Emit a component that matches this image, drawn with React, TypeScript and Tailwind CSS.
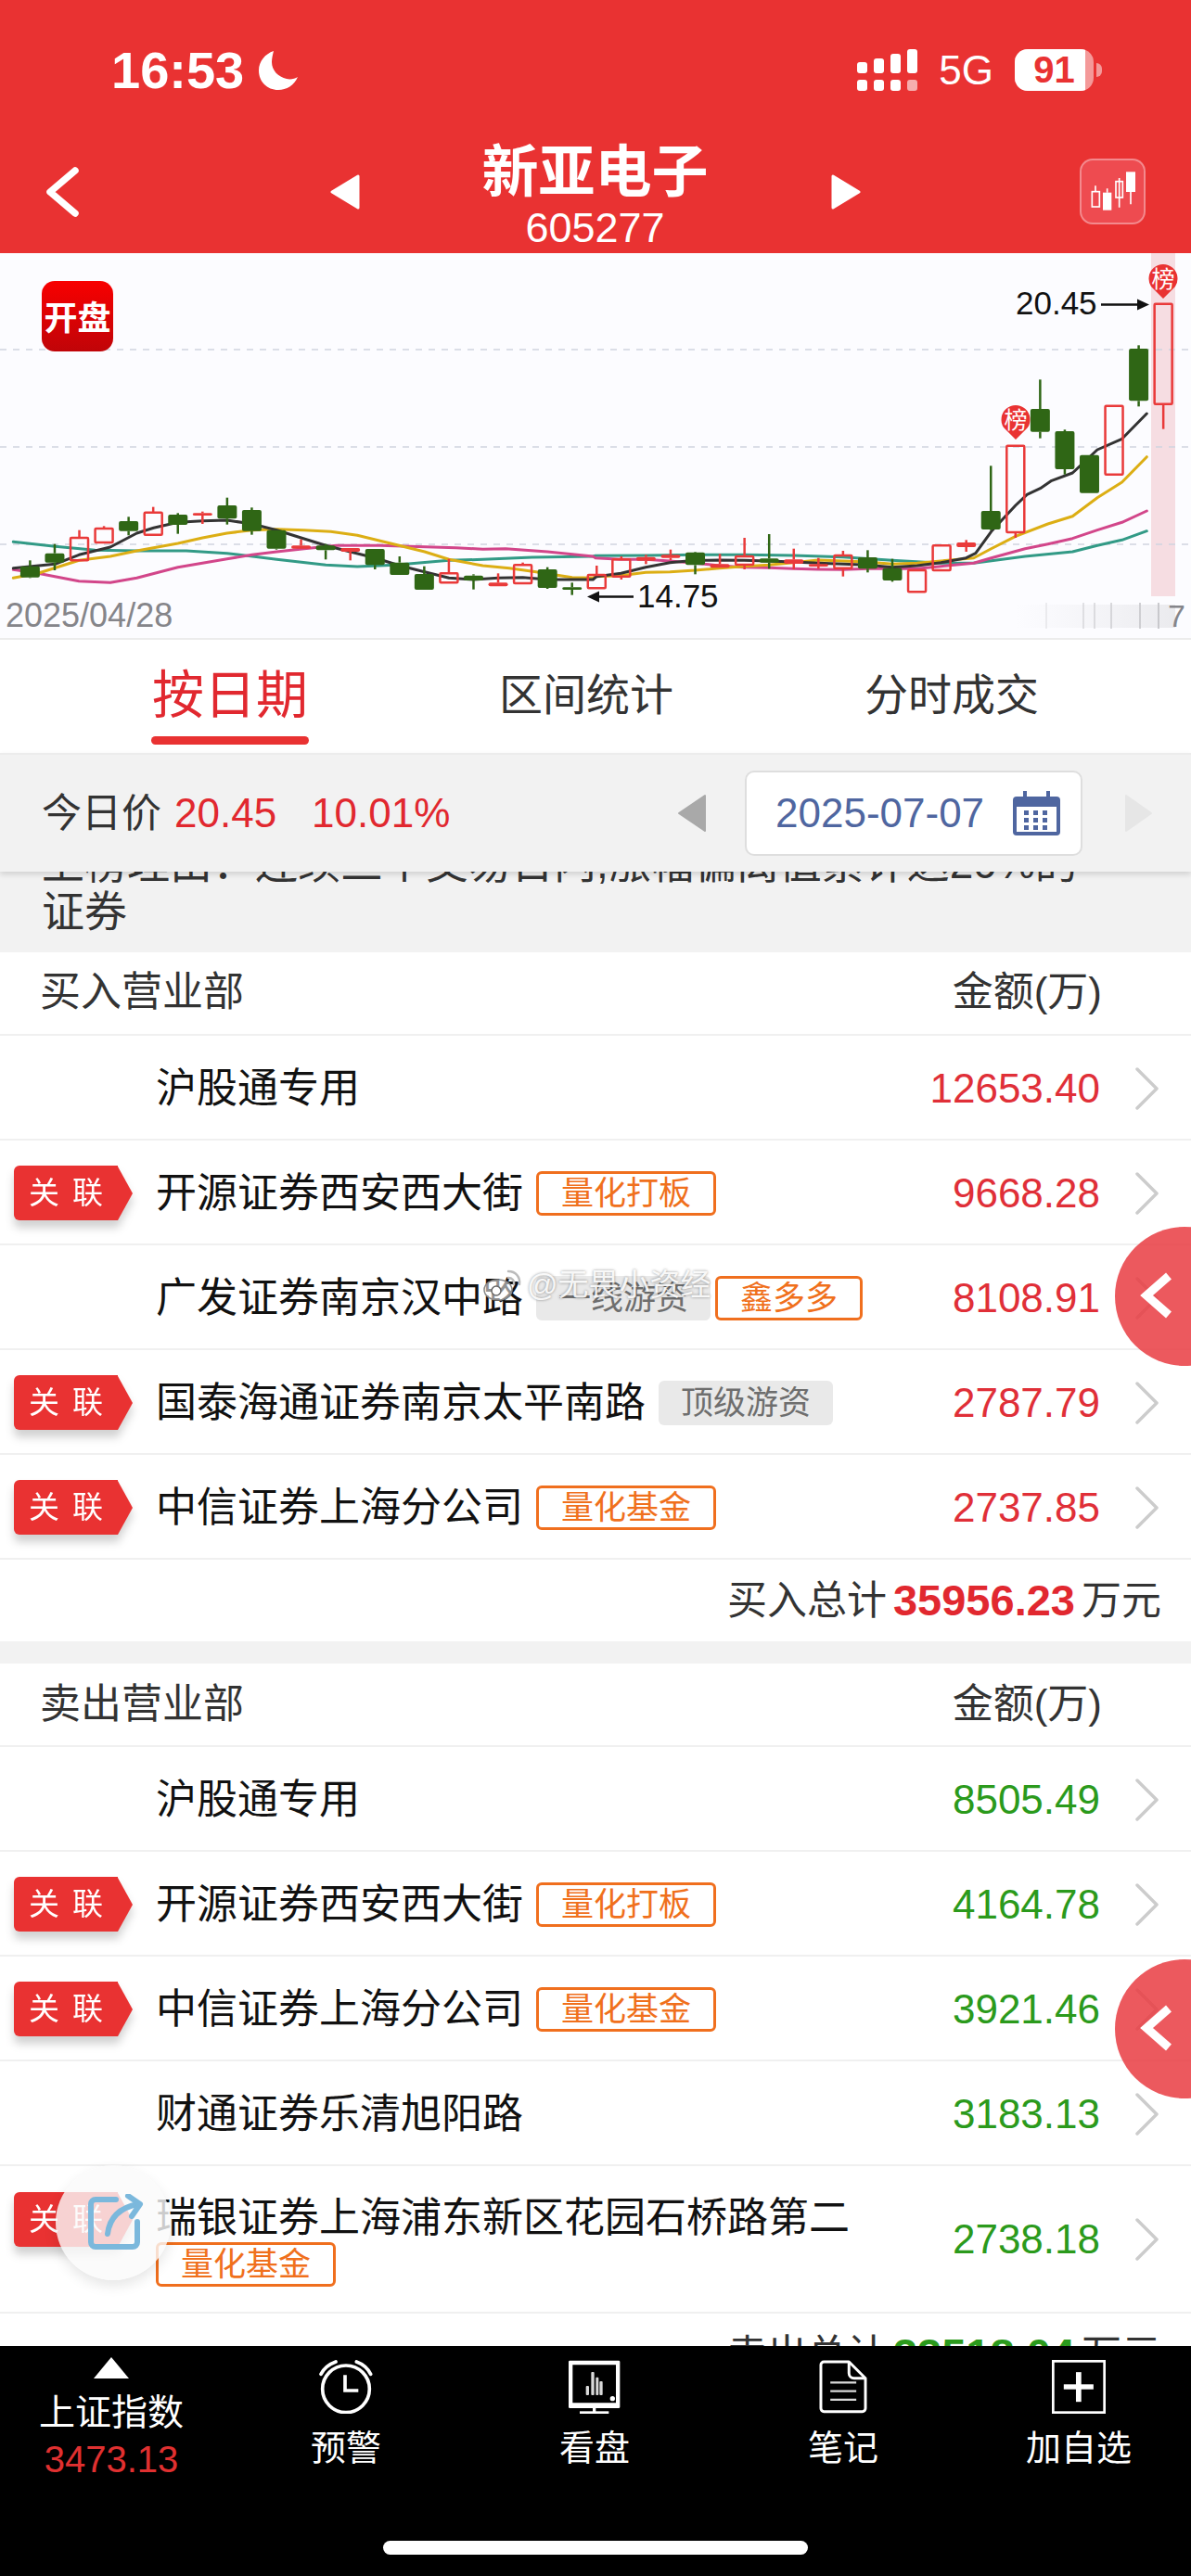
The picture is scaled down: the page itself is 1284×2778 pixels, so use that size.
import React from "react";

const RED = "#e93232";

// candle data read off the chart: body top, body bottom, wick top, wick bottom (zoomed px), type
const candles: [number, number, number, number, "r" | "g"][] = [
  [1022, 1058, 1003, 1060, "g"], [980, 1010, 950, 1035, "g"], [930, 1003, 905, 1003, "r"], [900, 945, 892, 945, "r"],
  [876, 908, 862, 922, "g"], [848, 920, 830, 920, "r"], [855, 888, 850, 917, "g"], [850, 858, 845, 885, "r"],
  [825, 868, 800, 887, "g"], [840, 908, 832, 920, "g"], [905, 965, 905, 968, "g"], [955, 965, 935, 965, "r"],
  [955, 970, 950, 1000, "g"], [963, 975, 963, 1003, "r"], [966, 1018, 966, 1032, "g"], [1010, 1050, 990, 1050, "g"],
  [1047, 1098, 1022, 1098, "g"], [1045, 1075, 998, 1075, "r"], [1052, 1068, 1048, 1097, "g"], [1075, 1087, 1045, 1087, "r"],
  [1018, 1077, 1010, 1077, "r"], [1032, 1092, 1025, 1095, "g"], [1090, 1098, 1075, 1115, "g"], [1050, 1093, 1020, 1093, "r"],
  [1000, 1055, 990, 1065, "r"], [992, 1004, 985, 1015, "r"], [985, 995, 968, 1002, "r"], [977, 1018, 975, 1048, "g"],
  [1015, 1027, 982, 1027, "r"], [990, 1017, 930, 1032, "r"], [997, 1010, 918, 1030, "g"], [1000, 1014, 965, 1032, "r"],
  [1015, 1023, 995, 1030, "r"], [987, 1028, 972, 1055, "r"], [993, 1030, 970, 1042, "g"], [1028, 1068, 998, 1072, "g"],
  [1035, 1105, 1035, 1105, "r"], [955, 1035, 955, 1035, "r"], [945, 960, 937, 975, "r"], [843, 903, 697, 905, "g"],
  [632, 912, 632, 930, "r"], [513, 587, 418, 608, "g"], [585, 708, 580, 725, "g"], [662, 785, 662, 785, "g"],
  [503, 725, 503, 725, "r"], [318, 487, 307, 505, "g"], [173, 497, 173, 578, "r"],
];

const line = (left: number[][], right: number[][]) =>
  [
    ...left.map(([x, y]) => `${(x / 2.44).toFixed(1)},${(270 + y / 3).toFixed(1)}`),
    ...right.map(([x, y]) => `${(642 + x / 2.44).toFixed(1)},${(270 + y / 3).toFixed(1)}`),
  ].join(" ");

const ma = [
  {
    color: "#329a86",
    pts: line(
      [[35, 943], [145, 958], [250, 970], [360, 972], [490, 972], [597, 980], [728, 1000], [857, 1018], [940, 1023], [1040, 1018], [1181, 1003], [1270, 1000], [1400, 993], [1560, 990]],
      [[0, 988], [132, 987], [262, 985], [391, 985], [520, 987], [651, 992], [780, 1003], [909, 1012], [995, 1012], [1130, 990], [1255, 975], [1320, 955], [1385, 937], [1450, 908]]
    ),
  },
  {
    color: "#d2468a",
    pts: line(
      [[35, 1033], [100, 1045], [208, 1070], [290, 1075], [360, 1060], [468, 1025], [597, 998], [663, 985], [728, 975], [800, 965], [885, 955], [1000, 955], [1200, 962], [1270, 967], [1330, 965], [1440, 975], [1560, 990]],
      [[0, 995], [67, 1000], [132, 1000], [196, 1005], [262, 1012], [326, 1020], [391, 1025], [456, 1027], [520, 1030], [586, 1032], [651, 1033], [716, 1030], [780, 1030], [846, 1030], [909, 1022], [995, 1012], [1041, 995], [1130, 965], [1190, 950], [1255, 932], [1320, 905], [1385, 880], [1450, 843]]
    ),
  },
  {
    color: "#dcae14",
    pts: line(
      [[35, 1060], [100, 1045], [208, 1003], [290, 990], [360, 972], [468, 948], [533, 930], [597, 915], [663, 905], [728, 902], [800, 905], [870, 910], [940, 922], [1050, 955], [1117, 975], [1181, 1000], [1270, 1020], [1340, 1028], [1410, 1040], [1505, 1058], [1560, 1060]],
      [[0, 1055], [67, 1052], [132, 1042], [196, 1040], [262, 1035], [326, 1028], [391, 1022], [456, 1018], [520, 1010], [586, 1002], [651, 1005], [716, 1008], [780, 1015], [846, 1012], [909, 1005], [995, 995], [1041, 965], [1105, 925], [1190, 885], [1255, 860], [1320, 800], [1385, 750], [1450, 668]]
    ),
  },
  {
    color: "#333333",
    pts: line(
      [[35, 1028], [145, 1015], [208, 985], [290, 960], [360, 915], [404, 898], [468, 880], [533, 875], [597, 873], [663, 885], [728, 905], [792, 930], [857, 955], [921, 975], [987, 995], [1052, 1020], [1117, 1040], [1181, 1060], [1246, 1065], [1310, 1060], [1375, 1058], [1442, 1065], [1560, 1065]],
      [[3, 1055], [67, 1045], [132, 1025], [196, 1010], [262, 1003], [326, 1002], [391, 1003], [456, 1005], [520, 1008], [586, 1012], [651, 1015], [716, 1018], [780, 1025], [846, 1020], [909, 1010], [975, 995], [1000, 980], [1041, 910], [1105, 825], [1135, 790], [1170, 770], [1200, 745], [1255, 720], [1320, 645], [1385, 610], [1450, 528]]
    ),
  },
];

const FONT = "'Liberation Sans','Noto Sans CJK SC',sans-serif";

function Pin({ x, y }: { x: number; y: number }) {
  return (
    <g>
      <path d={`M${x} ${y + 37} L${x - 13} ${y + 24} A15.5 15.5 0 1 1 ${x + 13} ${y + 24} Z`} fill={RED} />
      <text x={x} y={y + 25} textAnchor="middle" fontSize="25" fill="#fff" fontFamily={FONT}>榜</text>
    </g>
  );
}

function Chart() {
  return (
    <svg viewBox="0 273 1284 415" className="block w-full h-[415px]">
      <defs>
        <linearGradient id="axis" x1="0" x2="1" y1="0" y2="0">
          <stop offset="0" stopColor="#e4e4e8" stopOpacity="0" />
          <stop offset="1" stopColor="#dcdce0" />
        </linearGradient>
        <linearGradient id="ticks" x1="1095" x2="1267" y1="0" y2="0" gradientUnits="userSpaceOnUse">
          <stop offset="0" stopColor="#d0d0d4" stopOpacity="0.2" />
          <stop offset="1" stopColor="#c4c4c8" />
        </linearGradient>
        <linearGradient id="kp" x1="0" x2="0" y1="0" y2="1">
          <stop offset="0" stopColor="#f80000" />
          <stop offset="1" stopColor="#c00408" />
        </linearGradient>
      </defs>
      <rect x="1241" y="273" width="26" height="370" fill="#f6dde2" />
      {[377, 482, 587].map((y) => (
        <line key={y} x1="0" x2="1284" y1={y} y2={y} stroke="#cfd4e0" strokeWidth="1.5" strokeDasharray="7 7" />
      ))}
      {ma.map((m) => (
        <polyline key={m.color} points={m.pts} fill="none" stroke={m.color} strokeWidth="3" strokeLinejoin="round" strokeLinecap="round" />
      ))}
      {candles.map(([bt, bb, wt, wb, t], i) => {
        const x = 32.4 + i * 26.56;
        const color = t === "g" ? "#2f6615" : "#e93a3a";
        const by = 270 + bt / 3;
        const h = (bb - bt) / 3;
        const flat = h < 6;
        return (
          <g key={i}>
            <line x1={x} x2={x} y1={270 + wt / 3} y2={by} stroke={color} strokeWidth="2.5" />
            <line x1={x} x2={x} y1={by + h} y2={270 + wb / 3} stroke={color} strokeWidth="2.5" />
            {t === "g" || flat ? (
              <rect x={x - 10.5} y={by} width="21" height={h} rx="2" fill={color} />
            ) : (
              <rect x={x - 9.5} y={by} width="19" height={h} rx="1" fill="none" stroke={color} strokeWidth="2.5" />
            )}
          </g>
        );
      })}
      <Pin x={1254} y={285} />
      <Pin x={1095} y={437} />

      <rect x="45" y="303" width="77" height="76" rx="14" fill="url(#kp)" />
      <text x="83.5" y="356" textAnchor="middle" fontSize="36" fontWeight="700" fill="#fff" fontFamily={FONT}>开盘</text>

      <text x="1095" y="339" fontSize="35" fill="#111" fontFamily={FONT}>20.45</text>
      <path d="M1187 328.5H1232" stroke="#111" strokeWidth="2.5" />
      <path d="M1239 328.5L1226 322.5V334.5Z" fill="#111" />
      <text x="687" y="655" fontSize="35" fill="#111" fontFamily={FONT}>14.75</text>
      <path d="M640 643.5H683" stroke="#111" strokeWidth="2.5" />
      <path d="M633 643.5L646 637.5V649.5Z" fill="#111" />

      <text x="6" y="676" fontSize="36" fill="#85858a" fontFamily={FONT}>2025/04/28</text>
      <rect x="1095" y="652" width="172" height="25" fill="url(#axis)" opacity="0.55" />
      {[1128, 1168, 1180, 1198, 1229, 1249].map((x) => (
        <rect key={x} x={x - 1} y="650" width="2" height="28" fill="url(#ticks)" />
      ))}
      <text x="1259" y="676" fontSize="34" fill="#85858a" fontFamily={FONT}>7</text>
    </svg>
  );
}

function Chevron() {
  return (
    <svg width="25" height="46" viewBox="0 0 25 46" className="shrink-0 ml-[38px] mr-[35px]">
      <polyline points="2,2 23,23 2,44" fill="none" stroke="#cccccc" strokeWidth="3.5" strokeLinecap="round" strokeLinejoin="round" />
    </svg>
  );
}

function Badge({ className = "" }: { className?: string }) {
  return (
    <div className={`flex items-center ml-[15px] drop-shadow-[0_8px_5px_rgba(0,0,0,0.18)] ${className}`}>
      <div className="w-[112px] h-[59px] bg-[#e93232] rounded-l-[6px] flex items-center justify-center gap-[14px] text-white text-[33px] leading-[59px]">
        <span>关</span>
        <span>联</span>
      </div>
      <div className="w-0 h-0 border-y-[29.5px] border-y-transparent border-l-[16px] border-l-[#e93232]" />
    </div>
  );
}

function Tag({ text, gray, className = "" }: { text: string; gray?: boolean; className?: string }) {
  return gray ? (
    <span className={`h-[48px] rounded-[6px] bg-[#e9e9e9] text-[#6e6e6e] text-[35px] leading-[48px] px-[24px] whitespace-nowrap ${className}`}>{text}</span>
  ) : (
    <span className={`h-[48px] rounded-[6px] border-[3px] border-[#f06f1e] text-[#f0701c] text-[35px] leading-[42px] px-[24px] whitespace-nowrap ${className}`}>{text}</span>
  );
}

type Row = { name: string; value: string; linked?: boolean; tags?: { text: string; gray?: boolean }[] };

const buyRows: Row[] = [
  { name: "沪股通专用", value: "12653.40" },
  { name: "开源证券西安西大街", value: "9668.28", linked: true, tags: [{ text: "量化打板" }] },
  { name: "广发证券南京汉中路", value: "8108.91", tags: [{ text: "一线游资", gray: true }, { text: "鑫多多" }] },
  { name: "国泰海通证券南京太平南路", value: "2787.79", linked: true, tags: [{ text: "顶级游资", gray: true }] },
  { name: "中信证券上海分公司", value: "2737.85", linked: true, tags: [{ text: "量化基金" }] },
];

const sellRows: Row[] = [
  { name: "沪股通专用", value: "8505.49" },
  { name: "开源证券西安西大街", value: "4164.78", linked: true, tags: [{ text: "量化打板" }] },
  { name: "中信证券上海分公司", value: "3921.46", linked: true, tags: [{ text: "量化基金" }] },
  { name: "财通证券乐清旭阳路", value: "3183.13" },
];

function SeatRow({ row, color }: { row: Row; color: string }) {
  return (
    <div className="h-[113px] border-b-2 border-[#f0f0f0] flex items-center bg-white pt-[2px]">
      <div className="w-[168px] shrink-0">{row.linked && <Badge />}</div>
      <span className="text-[44px] leading-[50px] text-[#111] whitespace-nowrap">{row.name}</span>
      <div className="flex items-center gap-[5px] ml-[14px]">
        {row.tags?.map((t) => (
          <Tag key={t.text} text={t.text} gray={t.gray} />
        ))}
      </div>
      <span className={`ml-auto text-[44px] leading-[50px] ${color}`}>{row.value}</span>
      <Chevron />
    </div>
  );
}

function ListHeader({ title, className }: { title: string; className: string }) {
  return (
    <div className={`flex items-center justify-between pl-[43px] pr-[96px] border-b-2 border-[#f0f0f0] bg-white text-[44px] leading-[50px] text-[#333] ${className}`}>
      <span>{title}</span>
      <span>金额(万)</span>
    </div>
  );
}

function Total({ label, value, color, className = "" }: { label: string; value: string; color: string; className?: string }) {
  return (
    <div className={`flex items-center justify-end pr-[32px] bg-white text-[43px] leading-[50px] text-[#333] ${className}`}>
      <span>{label}</span>
      <span className={`font-bold text-[47px] mx-[7px] ${color}`}>{value}</span>
      <span>万元</span>
    </div>
  );
}

function SideTab({ className }: { className: string }) {
  return (
    <div className={`absolute left-[1202px] w-[150px] h-[150px] rounded-full bg-[#e93c42]/85 ${className}`}>
      <svg width="38" height="50" viewBox="0 0 38 50" className="absolute left-[27px] top-[49px]">
        <polyline points="31,4 7,25 31,46" fill="none" stroke="#fff" strokeWidth="9" strokeLinejoin="miter" />
      </svg>
    </div>
  );
}

function BottomItem({ icon, label }: { icon: React.ReactNode; label: string }) {
  return (
    <div className="flex flex-col items-center pt-[15px]">
      <div className="h-[58px] flex items-center">{icon}</div>
      <span className="mt-[15px] text-[38px] leading-[44px] text-white">{label}</span>
    </div>
  );
}

export default function App() {
  return (
    <div className="relative w-[1284px] h-[2778px] overflow-hidden flex flex-col bg-white font-['Liberation_Sans','Noto_Sans_CJK_SC',sans-serif]">
      {/* red header */}
      <div className="bg-[#e93232] text-white shrink-0">
        <div className="h-[156px] flex justify-between pt-[53px] pl-[120px] pr-[96px]">
          <div className="flex items-center h-[46px]">
            <span className="text-[56px] leading-[46px] font-bold">16:53</span>
            <svg width="44" height="42" viewBox="0 0 44 42" className="ml-[15px]">
              <path d="M17 0C8 3 1 11 1 21c0 12 9 21 21 21 9 0 17-5 21-14-3 2-8 3-12 2C22 28 15 21 15 12c0-4 1-8 2-12Z" fill="#fff" />
            </svg>
          </div>
          <div className="flex items-start">
            <svg width="66" height="45" viewBox="0 0 66 45" className="mt-0">
              <rect x="0" y="14" width="11" height="12" rx="3" fill="#fff" />
              <rect x="18" y="10" width="11" height="16" rx="3" fill="#fff" />
              <rect x="36" y="5" width="11" height="21" rx="3" fill="#fff" />
              <rect x="54" y="0" width="11" height="26" rx="3" fill="#fff" />
              <rect x="0" y="33" width="11" height="12" rx="3" fill="#fff" />
              <rect x="18" y="33" width="11" height="12" rx="3" fill="#fff" />
              <rect x="36" y="33" width="11" height="12" rx="3" fill="#fff" />
              <rect x="54" y="33" width="11" height="12" rx="3" fill="#fff" opacity="0.6" />
            </svg>
            <span className="ml-[22px] text-[44px] leading-[46px]">5G</span>
            <div className="ml-[23px] relative w-[85px] h-[45px] rounded-[14px] overflow-hidden flex bg-white/50">
              <div className="w-[76px] h-full bg-white" />
              <span className="absolute inset-0 text-center text-[40px] leading-[45px] font-bold text-[#e93232]">91</span>
            </div>
            <div className="ml-[3px] mt-[15px] w-[6px] h-[15px] rounded-r-full bg-white/50" />
          </div>
        </div>

        <div className="h-[117px] flex justify-between items-start px-[49px]">
          <div className="w-[70px] pt-[24px]">
            <svg width="37" height="54" viewBox="0 0 37 54">
              <polyline points="32,4 5,27 32,50" fill="none" stroke="#fff" strokeWidth="7.5" strokeLinecap="round" strokeLinejoin="round" />
            </svg>
          </div>
          <div className="flex items-start">
            <svg width="32" height="38" viewBox="0 0 32 38" className="mt-[32px]">
              <path d="M30 2V36L2 19Z" fill="#fff" stroke="#fff" strokeWidth="3" strokeLinejoin="round" />
            </svg>
            <div className="w-[508px] flex flex-col items-center">
              <span className="text-[61px] leading-[60px] font-bold">新亚电子</span>
              <span className="text-[45px] leading-[50px] mt-[5px]">605277</span>
            </div>
            <svg width="32" height="38" viewBox="0 0 32 38" className="mt-[32px]">
              <path d="M2 2V36L30 19Z" fill="#fff" stroke="#fff" strokeWidth="3" strokeLinejoin="round" />
            </svg>
          </div>
          <div className="w-[71px] h-[71px] mt-[15px] rounded-[14px] bg-[#ee4b50] border-2 border-white/35 overflow-hidden">
            <svg viewBox="768 401 201 201" className="w-full h-full">
              <g fill="none" stroke="#fff" strokeWidth="5">
                <rect x="802" y="502" width="24" height="49" />
                <rect x="879" y="469" width="22" height="52" />
                <path d="M813 483V500M851 492V505M890 458V553M927 503V543" />
              </g>
              <rect x="837" y="505" width="28" height="57" fill="#fff" />
              <rect x="912" y="438" width="30" height="65" fill="#fff" />
            </svg>
          </div>
        </div>
      </div>

      {/* k line chart */}
      <div className="shrink-0 h-[417px] bg-[#fcfcff] border-b-2 border-[#ececec]">
        <Chart />
      </div>

      {/* tabs */}
      <div className="shrink-0 h-[122px] grid grid-cols-[496px_272px_516px] bg-white">
        <div className="flex flex-col items-center pt-[30px]">
          <span className="text-[56px] leading-[60px] text-[#e1282f]">按日期</span>
          <div className="mt-[14px] w-[170px] h-[9px] rounded-full bg-[#e93232]" />
        </div>
        <div className="text-center pt-[30px] text-[47px] leading-[60px] text-[#333]">区间统计</div>
        <div className="text-center pt-[30px] text-[47px] leading-[60px] text-[#333]">分时成交</div>
      </div>

      {/* date bar */}
      <div className="relative z-10 shrink-0 h-[128px] flex items-center pl-[45px] pr-[41px] bg-[#f2f2f2] border-t-2 border-[#ececec] shadow-[0_3px_6px_rgba(0,0,0,0.14)]">
        <span className="text-[43px] leading-[50px] text-[#333]">今日价</span>
        <span className="ml-[14px] text-[44px] leading-[50px] text-[#e1282f]">20.45</span>
        <span className="ml-[38px] text-[44px] leading-[50px] text-[#e1282f]">10.01%</span>
        <svg width="33" height="42" viewBox="0 0 33 42" className="ml-auto">
          <path d="M31 2V40L3 21Z" fill="#a9a9a9" stroke="#a9a9a9" strokeWidth="2" strokeLinejoin="round" />
        </svg>
        <div className="ml-[41px] w-[364px] h-[92px] rounded-[10px] bg-white border-2 border-[#dedede] flex items-center pl-[31px]">
          <span className="text-[44px] leading-[50px] text-[#4f66a0]">2025-07-07</span>
          <svg width="51" height="48" viewBox="0 0 51 48" className="ml-[31px]">
            <rect x="0" y="6" width="51" height="42" rx="4" fill="#4f66a0" />
            <rect x="4" y="17" width="43" height="27" fill="#fff" />
            <rect x="11" y="0" width="4" height="13" fill="#4f66a0" />
            <rect x="36" y="0" width="4" height="13" fill="#4f66a0" />
            <g fill="#4f66a0">
              {[12, 22, 32].map((x) => [21, 29, 37].map((y) => <rect key={`${x}-${y}`} x={x} y={y} width="5" height="5" />))}
            </g>
          </svg>
        </div>
        <svg width="31" height="42" viewBox="0 0 31 42" className="ml-[45px]">
          <path d="M2 2V40L29 21Z" fill="#e6e6e6" stroke="#e6e6e6" strokeWidth="2" strokeLinejoin="round" />
        </svg>
      </div>

      {/* scrolled content */}
      <div className="flex-1 min-h-0 overflow-hidden">
        <div className="h-[87px] overflow-hidden bg-[#f2f2f2] pl-[45px] text-[46px] leading-[52px] text-[#333]">
          <div className="-mt-[35px] whitespace-nowrap">上榜理由：连续三个交易日内,涨幅偏离值累计达20%的</div>
          <div>证券</div>
        </div>

        <ListHeader title="买入营业部" className="h-[90px] pb-[3px]" />
        {buyRows.map((r) => (
          <SeatRow key={r.name} row={r} color="text-[#e02f38]" />
        ))}
        <Total label="买入总计" value="35956.23" color="text-[#e1282f]" className="h-[88px]" />
        <div className="h-[24px] bg-[#f2f2f2]" />

        <ListHeader title="卖出营业部" className="h-[90px]" />
        {sellRows.map((r) => (
          <SeatRow key={r.name} row={r} color="text-[#2b9a1c]" />
        ))}
        <div className="h-[159px] border-b-2 border-[#f0f0f0] flex items-center bg-white">
          <div className="w-[168px] shrink-0 self-start pt-[28px]">
            <Badge />
          </div>
          <div className="flex flex-col items-start pt-[3px]">
            <span className="text-[44px] leading-[50px] text-[#111] whitespace-nowrap">瑞银证券上海浦东新区花园石桥路第二</span>
            <Tag text="量化基金" className="mt-[1px]" />
          </div>
          <span className="ml-auto text-[44px] leading-[50px] text-[#2b9a1c]">2738.18</span>
          <Chevron />
        </div>
        <Total label="卖出总计" value="33518.04" color="text-[#2b9a1c]" className="h-[88px]" />
      </div>

      {/* bottom bar */}
      <div className="shrink-0 h-[248px] bg-black flex flex-col">
        <div className="grid grid-cols-[240px_266px_270px_266px_242px]">
          <div className="flex flex-col items-center pt-[12px]">
            <svg width="38" height="23" viewBox="0 0 38 23">
              <path d="M19 0L38 23H0Z" fill="#fff" />
            </svg>
            <span className="mt-[15px] text-[39px] leading-[44px] text-white">上证指数</span>
            <span className="mt-[6px] text-[40px] leading-[44px] text-[#e03030]">3473.13</span>
          </div>
          <BottomItem
            label="预警"
            icon={
              <svg width="58" height="58" viewBox="76 26 174 174" fill="none" stroke="#fff" strokeWidth="11" strokeLinecap="round">
                <circle cx="163" cy="120" r="76" />
                <path d="M160 75V125H203" strokeLinecap="butt" />
                <path d="M82 72C92 52 108 40 130 32" />
                <path d="M197 32C219 40 233 52 243 72" />
              </svg>
            }
          />
          <BottomItem
            label="看盘"
            icon={
              <svg width="56" height="58" viewBox="882 26 168 174">
                <path fillRule="evenodd" d="M886 28H1044a4 4 0 0 1 4 4V178a4 4 0 0 1-4 4H886a4 4 0 0 1-4-4V32a4 4 0 0 1 4-4ZM895 42V165H1035V42Z" fill="#fff" />
                <rect x="938" y="110" width="10" height="30" rx="3" fill="#fff" opacity="0.85" />
                <rect x="955" y="65" width="10" height="75" rx="3" fill="#fff" opacity="0.85" />
                <rect x="970" y="82" width="9" height="58" rx="3" fill="#fff" opacity="0.85" />
                <rect x="982" y="95" width="10" height="45" rx="3" fill="#fff" opacity="0.85" />
                <circle cx="1024" cy="151" r="8" fill="#fff" />
                <rect x="960" y="182" width="10" height="12" fill="#fff" />
                <rect x="918" y="192" width="94" height="8" fill="#fff" />
              </svg>
            }
          />
          <BottomItem
            label="笔记"
            icon={
              <svg width="52" height="58" viewBox="68 26 158 174" fill="none" stroke="#fff" strokeWidth="9" strokeLinejoin="round">
                <path d="M84 31H166L220 85V184a10 10 0 0 1-10 10H84a10 10 0 0 1-10-10V41a10 10 0 0 1 10-10Z" />
                <path d="M166 31V68a17 17 0 0 0 17 17H220" />
                <path d="M105 99H190M105 127H190M105 155H190" strokeWidth="7" opacity="0.85" />
              </svg>
            }
          />
          <BottomItem
            label="加自选"
            icon={
              <svg width="58" height="58" viewBox="826 28 172 172">
                <rect x="830" y="32" width="164" height="164" fill="none" stroke="#fff" strokeWidth="8" />
                <rect x="864" y="106" width="95" height="16" fill="#fff" />
                <rect x="903" y="67" width="17" height="95" fill="#fff" />
              </svg>
            }
          />
        </div>
        <div className="mt-auto mb-[23px] mx-auto w-[458px] h-[15px] rounded-full bg-white" />
      </div>

      {/* floating bits over the list */}
      <SideTab className="top-[1323px]" />
      <SideTab className="top-[2113px]" />

      <div className="absolute left-[60px] top-[2335px] w-[124px] h-[124px] rounded-full bg-[#fafafa]/80 shadow-[0_6px_14px_rgba(0,0,0,0.1)]">
        <svg width="60" height="62" viewBox="0 0 60 62" className="absolute left-[35px] top-[31px]">
          <path d="M30 6H8a5 5 0 0 0-5 5V52a5 5 0 0 0 5 5H48a5 5 0 0 0 5-5V30" fill="none" stroke="#7bb8dc" strokeWidth="6" strokeLinecap="round" />
          <path d="M21 43C23 27 32 15 54 11" fill="none" stroke="#7bb8dc" strokeWidth="6" strokeLinecap="round" />
          <path d="M43 2L56 11L47 24" fill="none" stroke="#7bb8dc" strokeWidth="6" strokeLinecap="round" strokeLinejoin="round" />
        </svg>
      </div>

      {/* watermark */}
      <div className="absolute left-[520px] top-[1366px] flex items-center text-[33px] leading-[40px] text-white/90 [text-shadow:0_0_3px_rgba(0,0,0,0.45)]">
        <svg width="44" height="38" viewBox="0 0 44 38" className="mr-[4px]">
          <ellipse cx="17" cy="24" rx="15" ry="11" fill="#fff" fillOpacity="0.55" stroke="#888" strokeWidth="1.5" />
          <circle cx="15" cy="25" r="5" fill="#fff" stroke="#666" strokeWidth="1.5" />
          <path d="M28 4C36 4 41 10 40 18M28 11C32 11 35 14 34 18" fill="none" stroke="#bbb" strokeWidth="2.5" strokeLinecap="round" />
        </svg>
        <span className="whitespace-nowrap">@无畏小资经</span>
      </div>
    </div>
  );
}
